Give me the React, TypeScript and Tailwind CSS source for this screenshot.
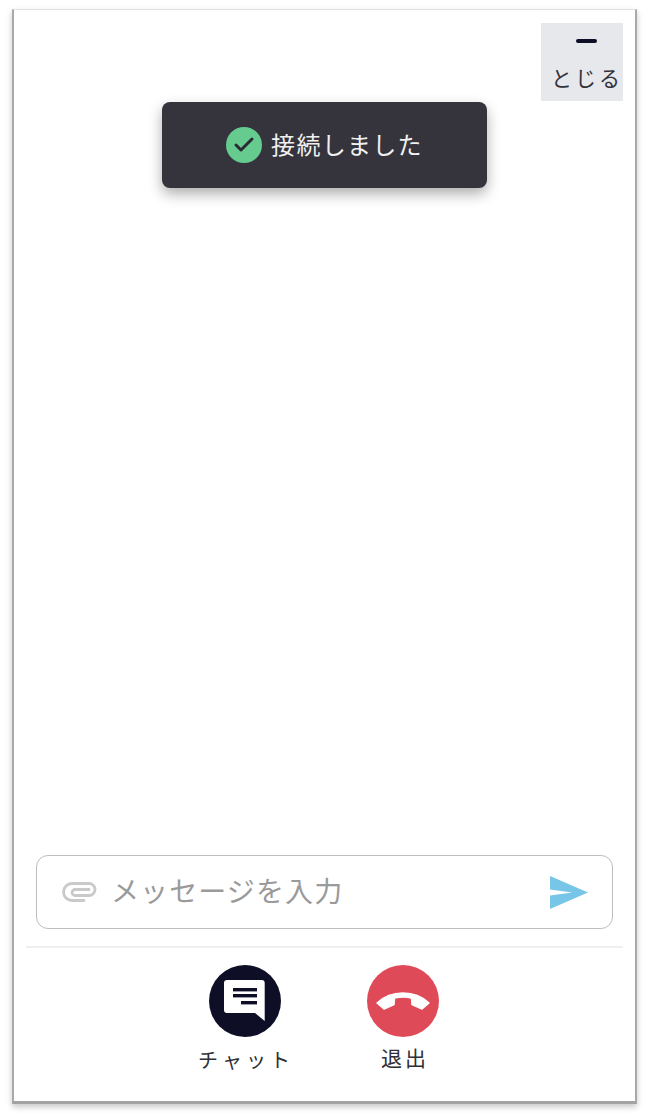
import { Check } from "lucide-react";

const font = "font-['Noto_Sans_CJK_JP','Noto_Sans',sans-serif]";

function ChatIcon() {
  return (
    <svg width="44" height="44" viewBox="0 0 44 44">
      <path d="M4 1h34.700a3 3 0 0 1 3 3V42L32 34H4a3 3 0 0 1-3-3V4a3 3 0 0 1 3-3z" fill="#fff" />
      <rect x="10" y="9" width="24" height="3.400" fill="#0e0e26" />
      <rect x="10" y="15" width="24" height="3.400" fill="#0e0e26" />
      <rect x="18" y="22" width="16" height="3.400" fill="#0e0e26" />
    </svg>
  );
}

function HangupIcon() {
  return (
    <svg width="56" height="18" viewBox="0 0 56 18">
      <path
        d="M2 11C10 3.500 19 1 28 1S46 3.500 54 11L47 17L37 12.500L36.500 6C31 4.800 25 4.800 19.500 6L19 12.500L9 17Z"
        fill="#fff"
        stroke="#fff"
        strokeWidth="1.500"
        strokeLinejoin="round"
      />
    </svg>
  );
}

export default function App() {
  return (
    <div className={`w-[648px] h-[1118px] bg-white pt-[9px] pl-[12px] ${font}`}>
      <div className="relative w-[625px] h-[1095px] flex flex-col bg-white border-l-2 border-r-2 border-b-[3px] border-t border-l-[#a9a9a9] border-r-[#a9a9a9] border-b-[#a3a3a3] border-t-[#e2e2e2] shadow-[0_3px_6px_rgba(0,0,0,0.22)]">
        {/* Close */}
        <div className="flex justify-end pt-[13px] pr-[12px]">
          <button className="w-[82px] h-[78px] bg-[#e7e8ec] flex flex-col items-center">
            <span className="mt-[16px] ml-[9px] w-[21px] h-[4px] rounded-sm bg-[#0e0e26]" />
            <span className="mt-[19px] ml-[10px] text-[21px] leading-[30px] tracking-[3px] text-[#33323a] whitespace-nowrap">とじる</span>
          </button>
        </div>

        {/* Toast */}
        <div className="absolute left-[148px] top-[92px] w-[325px] h-[86px] rounded-lg bg-[#35333b] shadow-[0_6px_14px_rgba(0,0,0,0.32)] flex items-center justify-center gap-[9px]">
          <span className="-mt-[1px] w-[36px] h-[36px] rounded-full bg-[#66cb8f] flex items-center justify-center">
            <Check size={24} strokeWidth={3} color="#2b2b33" />
          </span>
          <span className="-mt-[2px] text-[24px] leading-[36px] tracking-[1.300px] text-[#f0f0f0] whitespace-nowrap">接続しました</span>
        </div>

        <div className="flex-1" />

        {/* Input */}
        <div className="mx-[22px] h-[74px] rounded-[12px] border border-[#bdbdbd] flex items-center pl-[25px] pr-[24px]">
          <svg width="36" height="20" viewBox="0 0 36 20" fill="none" stroke="#c9c9c9" strokeWidth="2.800" strokeLinecap="round" className="shrink-0">
            <path d="M22 18.500H10A8.500 8.500 0 0 1 10 1.500H27A6 6 0 0 1 27 13.500H13A3 3 0 0 1 13 7.500H27" />
          </svg>
          <span className="ml-[13px] -mt-[4px] flex-1 text-[28px] leading-[36px] tracking-[1.100px] text-[#9a9a9a] whitespace-nowrap">メッセージを入力</span>
          <svg width="38" height="33" viewBox="0 0 38 33" className="shrink-0">
            <path d="M0 0L38 16.500L0 33V19.500L22 16.500L0 13.500z" fill="#78c6e7" />
          </svg>
        </div>

        {/* Footer */}
        <div className="mt-[17px] ml-[12px] mr-[12px] h-[2px] bg-[#efefef]" />
        <div className="flex justify-center gap-[86px] pt-[17px] pb-[26px] pr-[1px]">
          <div className="w-[72px] flex flex-col items-center">
            <span className="w-[72px] h-[72px] rounded-full bg-[#0e0e26] flex items-center justify-center">
              <ChatIcon />
            </span>
            <span className="mt-[8px] ml-[2px] text-[20px] leading-[30px] tracking-[4px] text-[#2f2f36] whitespace-nowrap">チャット</span>
          </div>
          <div className="w-[72px] flex flex-col items-center">
            <span className="w-[72px] h-[72px] rounded-full bg-[#df4a58] flex items-center justify-center">
              <HangupIcon />
            </span>
            <span className="mt-[5px] ml-[4px] text-[21px] leading-[30px] tracking-[3px] text-[#2f2f36] whitespace-nowrap">退出</span>
          </div>
        </div>
      </div>
    </div>
  );
}
